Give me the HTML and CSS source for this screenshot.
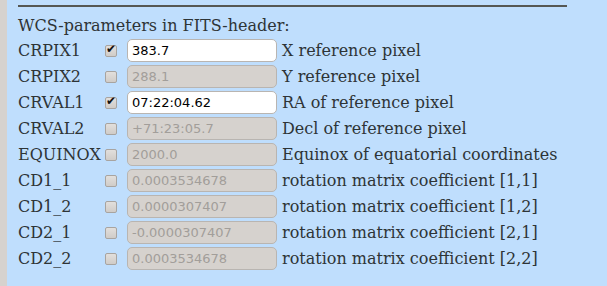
FILE: index.html
```html
<!DOCTYPE html>
<html lang="en">
  <head>
    <meta charset="UTF-8" />
    <title>WCS parameters</title>
    <link rel="stylesheet" href="styles.css">
  </head>
  <body>
    <div class="panel">
      <hr class="rule" />
      <p class="heading">WCS-parameters in FITS-header:</p>
      <div class="rows">
        <div class="row">
          <span class="key">CRPIX1</span>
          <input type="checkbox" checked />
          <input class="value" type="text" value="383.7" />
          <span class="desc">X reference pixel</span>
        </div>
        <div class="row">
          <span class="key">CRPIX2</span>
          <input type="checkbox" />
          <input class="value" type="text" value="288.1" disabled />
          <span class="desc">Y reference pixel</span>
        </div>
        <div class="row">
          <span class="key">CRVAL1</span>
          <input type="checkbox" checked />
          <input class="value" type="text" value="07:22:04.62" />
          <span class="desc">RA of reference pixel</span>
        </div>
        <div class="row">
          <span class="key">CRVAL2</span>
          <input type="checkbox" />
          <input class="value" type="text" value="+71:23:05.7" disabled />
          <span class="desc">Decl of reference pixel</span>
        </div>
        <div class="row">
          <span class="key">EQUINOX</span>
          <input type="checkbox" />
          <input class="value" type="text" value="2000.0" disabled />
          <span class="desc">Equinox of equatorial coordinates</span>
        </div>
        <div class="row">
          <span class="key">CD1_1</span>
          <input type="checkbox" />
          <input class="value" type="text" value="0.0003534678" disabled />
          <span class="desc">rotation matrix coefficient [1,1]</span>
        </div>
        <div class="row">
          <span class="key">CD1_2</span>
          <input type="checkbox" />
          <input class="value" type="text" value="0.0000307407" disabled />
          <span class="desc">rotation matrix coefficient [1,2]</span>
        </div>
        <div class="row">
          <span class="key">CD2_1</span>
          <input type="checkbox" />
          <input class="value" type="text" value="-0.0000307407" disabled />
          <span class="desc">rotation matrix coefficient [2,1]</span>
        </div>
        <div class="row">
          <span class="key">CD2_2</span>
          <input type="checkbox" />
          <input class="value" type="text" value="0.0003534678" disabled />
          <span class="desc">rotation matrix coefficient [2,2]</span>
        </div>
      </div>
    </div>
  </body>
</html>
```

FILE: styles.css
```css
html,
body {
  margin: 0;
  padding: 0;
  height: 100%;
}

body {
  background: #d6d2ce;
  padding-left: 7px;
  font-family: "DejaVu Serif", serif;
  color: #2e3436;
}

.panel {
  background: #bfdefd;
  height: 100%;
  padding: 5px 40px 0 11px;
  box-sizing: border-box;
}

.rule {
  margin: 0;
  border: none;
  border-top: 2px solid #555753;
}

.heading {
  margin: 9px 0 3px;
  font-size: 16px;
  line-height: 20px;
}

.rows {
  display: flex;
  flex-direction: column;
  gap: 3px;
}

.row {
  display: flex;
  align-items: center;
  height: 23px;
  font-size: 16px;
}

.key {
  width: 87px;
}

.row input[type="checkbox"] {
  appearance: none;
  width: 12px;
  height: 12px;
  margin: 0 10px 0 0;
  border: 1px solid #a8a4a0;
  border-radius: 2px;
  background: linear-gradient(#e2dfdc, #d0ccc8);
  box-sizing: border-box;
  position: relative;
}

.row input[type="checkbox"]:checked::after {
  content: "\2714";
  position: absolute;
  left: 0;
  top: -4px;
  font-family: "DejaVu Sans", sans-serif;
  font-size: 12px;
  font-weight: bold;
  color: #111111;
}

.value {
  width: 150px;
  height: 23px;
  box-sizing: border-box;
  margin: 0 5px 0 0;
  padding: 0 4px;
  border: 1px solid #b9b5b1;
  border-radius: 5px;
  background: #ffffff;
  font-family: "DejaVu Sans", sans-serif;
  font-size: 13px;
  color: #000000;
}

.value:disabled {
  background: #d6d2ce;
  color: #a29e9a;
}
```
